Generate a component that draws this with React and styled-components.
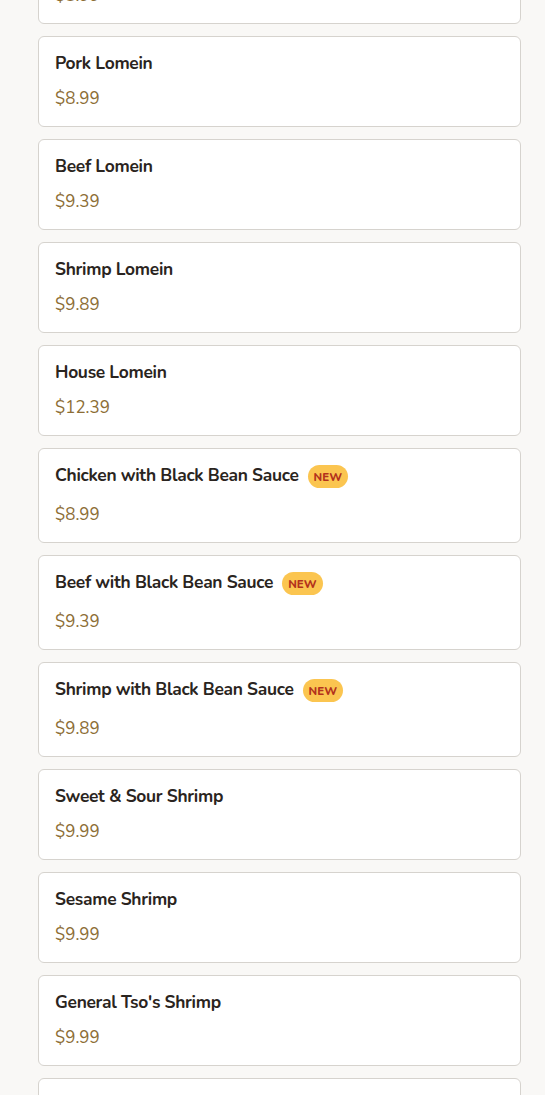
import React from "react";
import styled, { createGlobalStyle } from "styled-components";

const Global = createGlobalStyle`
  html, body { margin: 0; padding: 0; background: #f9f8f6; }
  body { font-family: "Nunito", "Lato", "Noto Sans", sans-serif; overflow: hidden; }
`;

const Page = styled.div`
  padding: 0 24px 0 38px;
  height: 1095px;
  overflow: hidden;
`;

const List = styled.div`
  display: flex;
  flex-direction: column;
  gap: 12px;
  margin-top: -67px;
`;

const Card = styled.div`
  background: #ffffff;
  border: 1px solid #d6d3ce;
  border-radius: 6px;
  padding: 14px 16px 15px;
  display: flex;
  flex-direction: column;
  gap: 12px;
`;

const Header = styled.div`
  display: flex;
  align-items: flex-start;
  gap: 9px;
`;

const Title = styled.div`
  font-size: 17.4px;
  font-weight: 700;
  line-height: 24px;
  color: #2a2420;
  letter-spacing: -0.3px;
`;

const Badge = styled.span`
  display: inline-flex;
  align-items: center;
  justify-content: center;
  height: 23px;
  margin: 2px 0 3px;
  padding: 0 6px;
  border-radius: 12px;
  background: #fbc550;
  color: #b3321c;
  font-size: 11.5px;
  font-weight: 800;
`;

const Price = styled.div`
  font-size: 17px;
  line-height: 24px;
  color: #8c6d35;
  font-weight: 400;
`;

const items = [
  { name: "Chicken Lomein", price: "$8.99" },
  { name: "Pork Lomein", price: "$8.99" },
  { name: "Beef Lomein", price: "$9.39" },
  { name: "Shrimp Lomein", price: "$9.89" },
  { name: "House Lomein", price: "$12.39" },
  { name: "Chicken with Black Bean Sauce", price: "$8.99", isNew: true },
  { name: "Beef with Black Bean Sauce", price: "$9.39", isNew: true },
  { name: "Shrimp with Black Bean Sauce", price: "$9.89", isNew: true },
  { name: "Sweet & Sour Shrimp", price: "$9.99" },
  { name: "Sesame Shrimp", price: "$9.99" },
  { name: "General Tso's Shrimp", price: "$9.99" },
  { name: "Kung Pao Shrimp", price: "$9.99" },
];

export default function App() {
  return (
    <>
      <Global />
      <Page>
        <List>
          {items.map((it) => (
            <Card key={it.name}>
              <Header>
                <Title>{it.name}</Title>
                {it.isNew && <Badge>NEW</Badge>}
              </Header>
              <Price>{it.price}</Price>
            </Card>
          ))}
        </List>
      </Page>
    </>
  );
}
